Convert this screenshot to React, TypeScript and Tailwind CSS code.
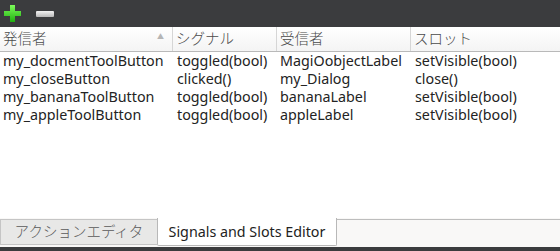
import React from "react";

// Signals & slots editor panel (Qt Designer style)

interface Connection {
  sender: string;
  signal: string;
  receiver: string;
  slot: string;
}

const connections: Connection[] = [
  { sender: "my_docmentToolButton", signal: "toggled(bool)", receiver: "MagiOobjectLabel", slot: "setVisible(bool)" },
  { sender: "my_closeButton", signal: "clicked()", receiver: "my_Dialog", slot: "close()" },
  { sender: "my_bananaToolButton", signal: "toggled(bool)", receiver: "bananaLabel", slot: "setVisible(bool)" },
  { sender: "my_appleToolButton", signal: "toggled(bool)", receiver: "appleLabel", slot: "setVisible(bool)" },
];

const FONT = "font-['Noto_Sans','Noto_Sans_CJK_JP',sans-serif]";

function PlusIcon() {
  return (
    <svg width="17" height="17" viewBox="0 0 17 17">
      <defs>
        <linearGradient id="pg" x1="0" y1="0" x2="0" y2="1">
          <stop offset="0" stopColor="#7dfc5a" />
          <stop offset="1" stopColor="#1fae10" />
        </linearGradient>
      </defs>
      <path d="M6 0h5v6h6v5h-6v6H6v-6H0V6h6z" fill="url(#pg)" />
    </svg>
  );
}

function MinusIcon() {
  return (
    <svg width="18" height="6" viewBox="0 0 18 6">
      <defs>
        <linearGradient id="mg" x1="0" y1="0" x2="0" y2="1">
          <stop offset="0" stopColor="#f2f2f2" />
          <stop offset="1" stopColor="#b8b8b8" />
        </linearGradient>
      </defs>
      <rect x="0" y="0" width="18" height="6" rx="1" fill="url(#mg)" />
    </svg>
  );
}

function HeaderCell({ label, width, sort }: { label: string; width: string; sort?: boolean }) {
  return (
    <div className={`${width} flex items-center justify-between pl-[3px] pr-2 border-r border-[#d6d6d6] h-full`}>
      <span>{label}</span>
      {sort && <span className="text-[7px] text-[#b5b5b5] mt-[-4px]">▲</span>}
    </div>
  );
}

export default function App() {
  return (
    <div className={`w-[560px] h-[251px] flex flex-col bg-[#f9f8f7] text-[14.3px] text-[#232323] ${FONT}`}>
      {/* Toolbar */}
      <div className="h-[27px] bg-[#3b3c3e] flex items-center gap-[15px] pl-[4px] shrink-0">
        <PlusIcon />
        <MinusIcon />
      </div>

      {/* Table */}
      <div className="h-[191px] bg-white flex flex-col shrink-0">
        <div className="h-[25px] flex items-center bg-gradient-to-b from-white to-[#f4f4f4] border-b border-[#b9b9b9] text-[#4a4a4a] text-[14.5px] font-light shrink-0">
          <HeaderCell label="発信者" width="w-[173px]" sort />
          <HeaderCell label="シグナル" width="w-[104px]" />
          <HeaderCell label="受信者" width="w-[134px]" />
          <div className="flex-1 pl-[3px]">スロット</div>
        </div>
        <div className="flex flex-col">
          {connections.map((c) => (
            <div key={c.sender} className="h-[18px] flex items-center leading-none">
              <div className="w-[173px] pl-[3px]">{c.sender}</div>
              <div className="w-[104px] pl-[4px]">{c.signal}</div>
              <div className="w-[134px] pl-[3px]">{c.receiver}</div>
              <div className="flex-1 pl-[4px]">{c.slot}</div>
            </div>
          ))}
        </div>
      </div>

      {/* Tabs */}
      <div className="flex-1 flex items-start">
        <div className="w-[157px] h-[26px] mt-[1px] bg-[#e8e8e7] border border-[#c5c5c5] border-r-0 flex items-center justify-center text-[#5a5a5a] text-[14.5px] font-light">
          アクションエディタ
        </div>
        <div className="w-[180px] h-[28px] bg-white border border-t-0 border-[#b8b8b8] rounded-b-[2px] flex items-center justify-center text-[#222]">
          Signals and Slots Editor
        </div>
        <div className="flex-1 h-[1px] mt-[1px] bg-[#bdbdbd]" />
      </div>

      <div className="h-[4px] bg-[#3b3c3e] shrink-0" />
    </div>
  );
}
